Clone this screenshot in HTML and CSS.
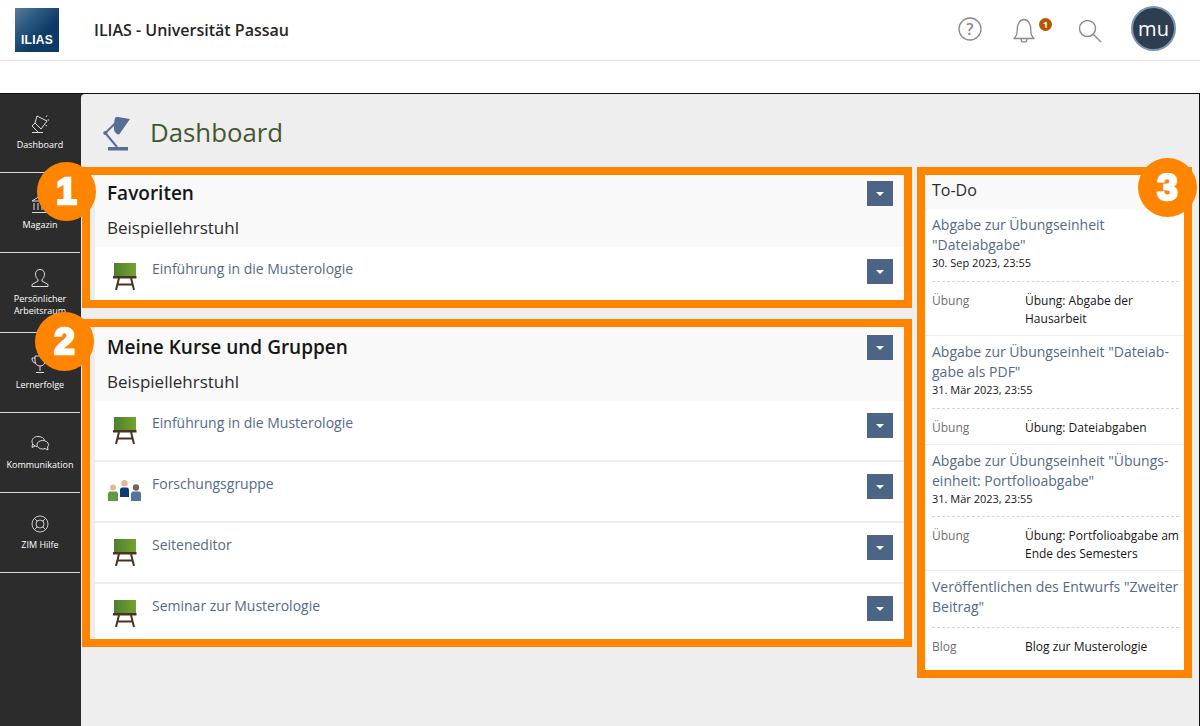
FILE: index.html
```html
<!DOCTYPE html>
<html lang="de">
<head>
<meta charset="utf-8">
<title>ILIAS - Dashboard</title>
<link rel="stylesheet" href="styles.css">
</head>
<body>
<header class="topbar">
  <div class="logo"><span>ILIAS</span></div>
  <div class="site-title">ILIAS - Universität Passau</div>
  <div class="tools">
    <svg class="tool-help" width="24" height="24" viewBox="0 0 24 24"><circle cx="12" cy="12" r="11" fill="none" stroke="#8a8a8a" stroke-width="1.300"/><text x="12" y="17.500" text-anchor="middle" class="qmark">?</text></svg>
    <div class="bell-wrap">
      <svg width="22" height="26" viewBox="0 0 22 26"><path d="M1 20.500h20c-2.400-2-3.200-4-3.200-8.500C17.800 5.500 15 1.500 11 1.500S4.200 5.500 4.200 12c0 4.500-.8 6.500-3.200 8.500z" fill="none" stroke="#8a8a8a" stroke-width="1.300" stroke-linejoin="round"/><path d="M8 21c0 2 1.300 3.200 3 3.200s3-1.200 3-3.200" fill="none" stroke="#8a8a8a" stroke-width="1.300"/></svg>
      <span class="badge">1</span>
    </div>
    <svg class="tool-search" width="24" height="24" viewBox="0 0 24 24"><circle cx="9.500" cy="9.500" r="8" fill="none" stroke="#8a8a8a" stroke-width="1.400"/><path d="M15.500 15.500l7.500 7.500" stroke="#8a8a8a" stroke-width="1.400"/></svg>
    <div class="avatar">mu</div>
  </div>
</header>
<div class="spacer"></div>
<div class="layout">
  <nav class="sidebar">
    <a class="nav-item">
      <svg width="20" height="20" viewBox="0 0 20 20" fill="none" stroke="#dcdcdc" stroke-width="1"><path d="M7 2l10 5-6 8-6-6z"/><path d="M5 9l-3 3 6 6"/><path d="M2 18.500h11"/><path d="M16 3l1-1.500M19 6h-1.500M15.500 11l1.500 1" stroke-width="1"/></svg>
      <span>Dashboard</span>
    </a>
    <a class="nav-item">
      <svg width="20" height="20" viewBox="0 0 20 20" fill="none" stroke="#dcdcdc" stroke-width="1"><path d="M2 7l8-5 8 5z"/><path d="M4 9v7M8 9v7M12 9v7M16 9v7M2 18.500h16"/></svg>
      <span>Magazin</span>
    </a>
    <a class="nav-item nav-two">
      <svg width="20" height="20" viewBox="0 0 20 20" fill="none" stroke="#dcdcdc" stroke-width="1"><path d="M10 1.500c-3 0-4.500 2-4.500 4.500 0 2.500 1 4.500 2.500 5.500v1.500l-6 3.500v2h16v-2l-6-3.500v-1.500c1.500-1 2.500-3 2.500-5.500 0-2.500-1.500-4.500-4.500-4.500z"/></svg>
      <span>Persönlicher<br>Arbeitsraum</span>
    </a>
    <a class="nav-item">
      <svg width="20" height="20" viewBox="0 0 20 20" fill="none" stroke="#dcdcdc" stroke-width="1"><path d="M5 2h10v5c0 3-2 5-5 5s-5-2-5-5z"/><path d="M5 4H2c0 3 1 5 4 5M15 4h3c0 3-1 5-4 5M10 12v5M6 18.500h8"/></svg>
      <span>Lernerfolge</span>
    </a>
    <a class="nav-item">
      <svg width="20" height="20" viewBox="0 0 20 20" fill="none" stroke="#dcdcdc" stroke-width="1"><path d="M7 12.500c-2.500-.3-5-2-5-5C2 4.500 4.500 2.500 8 2.500s6 1.500 6.500 4"/><path d="M2.500 10L2 13.500l3-1.500"/><path d="M12.500 6.500c-3 0-5.500 1.800-5.500 4.200s2.500 4.300 5.500 4.300c1 0 2-.2 2.500-.5l3 1.500-.5-3c.8-.8 1-1.500 1-2.300 0-2.400-3-4.200-6-4.200z"/></svg>
      <span>Kommunikation</span>
    </a>
    <a class="nav-item">
      <svg width="20" height="20" viewBox="0 0 20 20" fill="none" stroke="#c8c8c8" stroke-width="1"><circle cx="10" cy="10" r="8"/><circle cx="10" cy="10" r="4"/><path d="M4.500 4.500l3 3M15.500 4.500l-3 3M4.500 15.500l3-3M15.500 15.500l-3-3"/></svg>
      <span>ZIM Hilfe</span>
    </a>
  </nav>
  <main class="content">
    <div class="page-head">
      <svg class="lamp" width="28" height="35" viewBox="0 0 28 35"><path d="M12 2Q13 .5 15 1L27 3 16.500 18Q15.500 19 14 18L11.500 15.500Q10 10 12 2z" fill="#5a6e95"/><path d="M11.500 8L2.300 17l11.700 14" fill="none" stroke="#5a6e95" stroke-width="2"/><circle cx="2.300" cy="17" r="2.100" fill="#5a6e95"/><rect x="5" y="31" width="20" height="3.500" fill="#5a6e95"/></svg>
      <h1>Dashboard</h1>
    </div>
    <div class="columns">
      <div class="left-col">
        <section class="mark box-fav">
          <span class="num num-1">1</span>
          <div class="panel">
            <div class="panel-head">
              <h2>Favoriten</h2>
              <button class="caret"></button>
            </div>
            <h3>Beispiellehrstuhl</h3>
            <div class="row row-short">
              <svg class="ic" width="24" height="28" viewBox="0 0 24 28"><use href="#board"/></svg>
              <a class="row-title">Einführung in die Musterologie</a>
              <button class="caret"></button>
            </div>
          </div>
        </section>
        <section class="mark box-courses">
          <span class="num num-2">2</span>
          <div class="panel">
            <div class="panel-head panel-head-wide">
              <h2>Meine Kurse und Gruppen</h2>
              <button class="caret"></button>
            </div>
            <h3>Beispiellehrstuhl</h3>
            <div class="row">
              <svg class="ic" width="24" height="28" viewBox="0 0 24 28"><use href="#board"/></svg>
              <a class="row-title">Einführung in die Musterologie</a>
              <button class="caret"></button>
            </div>
            <div class="row">
              <svg class="ic ic-group" width="33" height="21" viewBox="0 0 33 21">
                <circle cx="5" cy="7.500" r="3" fill="#e2b896"/><path d="M0 21v-7c0-1.500 1-2.500 2-2.500h6c1 0 2 1 2 2.500v7z" fill="#5f9a45"/>
                <circle cx="16.500" cy="3.300" r="3.200" fill="#e2b896"/><path d="M12 17v-7c0-1.500 1-2.500 2-2.500h5c1 0 2 1 2 2.500v7z" fill="#0f3a73"/>
                <circle cx="28" cy="7.500" r="3.200" fill="#7a5f55"/><path d="M23 21v-7c0-1.500 1-2.500 2-2.500h6c1 0 2 1 2 2.500v7z" fill="#54749c"/>
              </svg>
              <a class="row-title">Forschungsgruppe</a>
              <button class="caret"></button>
            </div>
            <div class="row">
              <svg class="ic" width="24" height="28" viewBox="0 0 24 28"><use href="#board"/></svg>
              <a class="row-title">Seiteneditor</a>
              <button class="caret"></button>
            </div>
            <div class="row row-last">
              <svg class="ic" width="24" height="28" viewBox="0 0 24 28"><use href="#board"/></svg>
              <a class="row-title">Seminar zur Musterologie</a>
              <button class="caret"></button>
            </div>
          </div>
        </section>
      </div>
      <section class="mark box-todo">
        <span class="num num-3">3</span>
        <div class="todo-head">To-Do</div>
        <article class="todo">
          <a class="todo-title">Abgabe zur Übungseinheit "Dateiabgabe"</a>
          <div class="todo-date">30. Sep 2023, 23:55</div>
          <div class="todo-meta"><span class="meta-key">Übung</span><span class="meta-val">Übung: Abgabe der Hausarbeit</span></div>
        </article>
        <article class="todo">
          <a class="todo-title">Abgabe zur Übungseinheit "Dateiab&shy;gabe als PDF"</a>
          <div class="todo-date">31. Mär 2023, 23:55</div>
          <div class="todo-meta"><span class="meta-key">Übung</span><span class="meta-val">Übung: Dateiabgaben</span></div>
        </article>
        <article class="todo todo-tight">
          <a class="todo-title">Abgabe zur Übungseinheit "Übungs&shy;einheit: Portfolioabgabe"</a>
          <div class="todo-date">31. Mär 2023, 23:55</div>
          <div class="todo-meta"><span class="meta-key">Übung</span><span class="meta-val">Übung: Portfolioabgabe am Ende des Semesters</span></div>
        </article>
        <article class="todo">
          <a class="todo-title">Veröffentlichen des Entwurfs "Zweiter Beitrag"</a>
          <div class="todo-meta"><span class="meta-key">Blog</span><span class="meta-val">Blog zur Musterologie</span></div>
        </article>
      </section>
    </div>
  </main>
</div>
<svg class="defs" width="0" height="0">
  <defs>
    <linearGradient id="green" x1="0" x2="1" y1="0" y2="0"><stop offset="0" stop-color="#4e8030"/><stop offset="1" stop-color="#74a32e"/></linearGradient>
    <g id="board">
      <rect x="1" y="0" width="22" height="13" fill="url(#green)"/>
      <rect x="0" y="13" width="23.500" height="2.500" fill="#4a3324"/>
      <path d="M6 15L3 27M18 15l3 12M4.500 21.500h15" fill="none" stroke="#4a3324" stroke-width="2"/>
    </g>
  </defs>
</svg>
</body>
</html>
```
FILE: styles.css
```css
* { box-sizing: border-box; }
html, body { margin: 0; padding: 0; }
body {
  width: 1200px;
  height: 726px;
  overflow: hidden;
  background: #fff;
  font-family: "Open Sans", "Noto Sans", sans-serif;
  color: #161616;
}
.defs { display: block; height: 0; }

/* top bar */
.topbar {
  height: 61px;
  display: flex;
  align-items: center;
  padding: 0 24px 0 15px;
  border-bottom: 1px solid #dddddd;
}
.logo {
  width: 44px;
  height: 44px;
  background: linear-gradient(135deg, #5d7a99 0%, #2a5880 32%, #0e3b66 62%, #0e3b66 100%);
  display: flex;
  align-items: flex-end;
  justify-content: center;
  padding-bottom: 6px;
}
.logo span {
  font-family: "Liberation Sans", Arial, sans-serif;
  font-weight: 700;
  font-size: 12px;
  line-height: 12px;
  letter-spacing: .3px;
  color: #fff;
}
.site-title {
  margin-left: 35px;
  font-size: 16px;
  font-weight: 600;
  color: #262626;
}
.tools { margin-left: auto; display: flex; align-items: center; }
.qmark { font-family: "Open Sans", sans-serif; font-size: 16px; fill: #8a8a8a; font-weight: 600; }
.tool-help { margin-right: 31px; margin-top: -2px; }
.bell-wrap { position: relative; width: 22px; height: 26px; margin-right: 43px; margin-top: 2px; }
.bell-wrap svg { display: block; }
.badge {
  position: absolute;
  left: 26px;
  top: 0;
  width: 13px;
  height: 13px;
  border-radius: 50%;
  background: #b85400;
  color: #fff;
  font-size: 9px;
  font-weight: 700;
  line-height: 13px;
  text-align: center;
}
.tool-search { margin-right: 29px; margin-top: 2px; }
.avatar {
  width: 45px;
  height: 45px;
  border-radius: 50%;
  background: #2c3e50;
  border: 2px solid #7a97b5;
  color: #fff;
  font-size: 20px;
  line-height: 41px;
  text-align: center;
  margin-top: -3px;
}
.spacer { height: 32px; }

/* shell */
.layout {
  display: flex;
  height: 633px;
  border-top: 1px solid #111;
  background: #2c2c2c;
}
.sidebar { width: 81px; flex: none; padding-right: 1px; }
.nav-item {
  display: flex;
  flex-direction: column;
  align-items: center;
  height: 80px;
  padding-top: 21px;
  border-bottom: 1px solid #d8d8d8;
  color: #fff;
  font-size: 9px;
  font-weight: 500;
  line-height: 12px;
  text-align: center;
}
.nav-item:first-child { height: 79px; padding-top: 20px; }
.nav-two { padding-top: 15px; }
.nav-item svg { display: block; margin-bottom: 5px; }
.content {
  flex: 1;
  background: #eeeeee;
  border-right: 1px solid #111;
  border-top-left-radius: 4px;
  min-width: 0;
}
.page-head {
  height: 73px;
  display: flex;
  align-items: center;
  padding-left: 22px;
}
.lamp { flex: none; margin-top: 6px; }
.page-head h1 {
  margin: 2px 0 0 19px;
  font-size: 25.800px;
  font-weight: 400;
  color: #44582f;
  line-height: 32px;
}
.columns { display: flex; align-items: flex-start; gap: 5px; padding-left: 1px; }
.left-col { width: 830px; display: flex; flex-direction: column; gap: 11px; }
.mark { position: relative; border: 8px solid #ff8500; }
.num {
  position: absolute;
  width: 59px;
  height: 59px;
  border-radius: 50%;
  background: #ff8500;
  color: #fff;
  font-family: "Liberation Sans", Arial, sans-serif;
  font-weight: 700;
  font-size: 37px;
  line-height: 59px;
  text-align: center;
  -webkit-text-stroke: 2.500px #fff;
  z-index: 2;
}
.num-1 { left: -53px; top: -13px; }
.num-2 { left: -55px; top: -15px; }
.num-3 { right: -13px; top: -17px; }

/* panels */
.panel { margin-left: 5px; background: #f9f9f9; }
.panel-head {
  display: flex;
  justify-content: space-between;
  padding: 6px 11px 0 12px;
  height: 38px;
}
.panel-head-wide { padding-top: 8px; height: 40px; }
.panel-head h2 {
  margin: 0;
  font-size: 19px;
  font-weight: 600;
  line-height: 24px;
  color: #161616;
}
.panel h3 {
  margin: 0;
  padding: 3px 0 0 12px;
  height: 34px;
  font-size: 17px;
  line-height: 24px;
  font-weight: 400;
  color: #2c2c2c;
}
.caret {
  width: 26px;
  height: 25px;
  padding: 0;
  border: 0;
  background: #4c6586;
  position: relative;
  flex: none;
}
.caret::after {
  content: "";
  position: absolute;
  left: 9px;
  top: 11px;
  border-left: 4px solid transparent;
  border-right: 4px solid transparent;
  border-top: 4px solid #fff;
}
.row {
  height: 61px;
  display: flex;
  background: #fff;
  padding: 12px 11px 0 0;
  border-bottom: 2px solid #eeeeee;
}
.row-last { height: 55px; border-bottom: 0; }
.row-short { height: 53px; border-bottom: 0; }
.ic { flex: none; margin: 4px 0 0 18px; display: block; }
.ic-group { margin: 6px 0 0 13px; }
.row-title {
  margin-left: 15px;
  font-size: 14px;
  line-height: 20px;
  color: #566a85;
  flex: 1;
}
.ic-group + .row-title { margin-left: 11px; }

/* to-do */
.box-todo { width: 275px; height: 511px; background: #fff; flex: none; }
.todo-head {
  height: 34px;
  background: #f9f9f9;
  padding: 3px 7px;
  font-size: 16px;
  line-height: 24px;
  color: #2c2c2c;
}
.todo { border-bottom: 1px solid #eeeeee; }
.todo:last-child { border-bottom: 0; }
.todo-title {
  display: block;
  padding: 6px 4px 0 7px;
  font-size: 14px;
  line-height: 20px;
  color: #566a85;
  hyphens: manual;
}
.todo-date {
  padding: 0 7px;
  font-size: 11px;
  line-height: 16px;
  color: #161616;
}
.todo-meta {
  margin: 10px 5px 0 7px;
  border-top: 1px dashed #d6d6d6;
  padding-top: 10px;
  padding-bottom: 7px;
  display: flex;
  font-size: 12px;
  line-height: 18px;
}
.todo-tight .todo-meta { margin-top: 9px; }
.meta-key { width: 93px; flex: none; color: #6f6f6f; }
.meta-val { flex: 1; margin-right: -4px; color: #161616; }
```
